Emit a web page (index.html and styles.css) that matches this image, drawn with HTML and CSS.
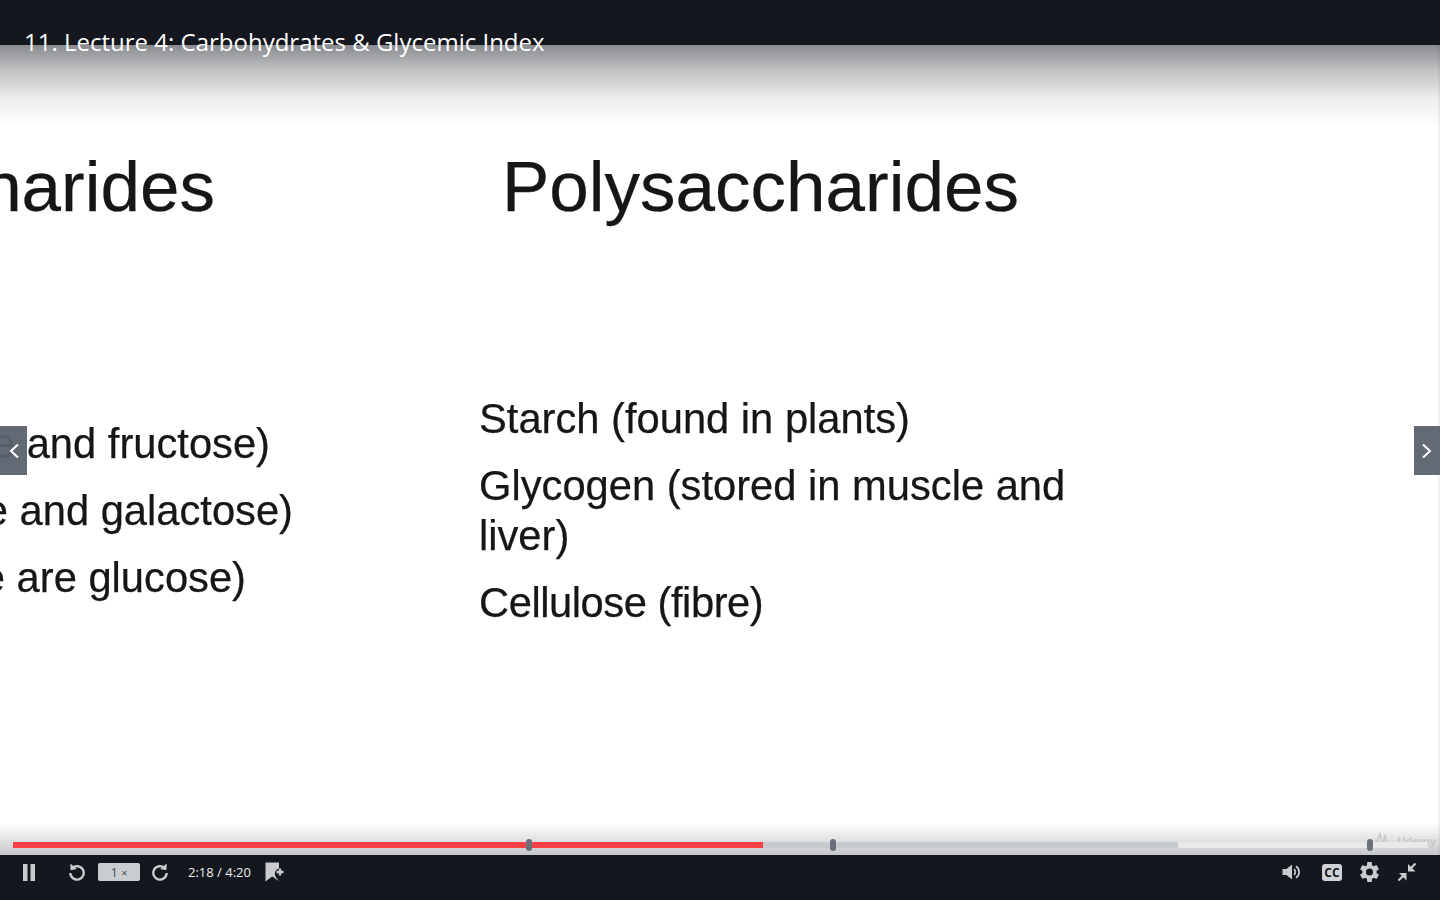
FILE: index.html
```html
<!DOCTYPE html>
<html lang="en">
<head>
    <meta charset="UTF-8">
    <title>11. Lecture 4: Carbohydrates &amp; Glycemic Index</title>
    <link rel="stylesheet" href="styles.css">
</head>
<body>
    <div class="player">
        <header class="title-bar">
            <div class="title">11. Lecture 4: Carbohydrates &amp; Glycemic Index</div>
        </header>

        <main class="video">
            <div class="slide">
                <div class="slide-left">
                    <div class="slide-heading heading-left"><span>harides</span></div>
                    <div class="left-list">
                        <div class="slide-line line-fructose"><span>e and fructose)</span></div>
                        <div class="slide-line line-galactose"><span>e and galactose)</span></div>
                        <div class="slide-line line-glucose"><span>e are glucose)</span></div>
                    </div>
                </div>
                <div class="slide-right">
                    <div class="slide-heading heading-right">Polysaccharides</div>
                    <div class="right-list">
                        <div class="slide-line">Starch (found in plants)</div>
                        <div class="slide-line">Glycogen (stored in muscle and<br>liver)</div>
                        <div class="slide-line line-cellulose">Cellulose (fibre)</div>
                    </div>
                </div>
            </div>

            <div class="shade-top"></div>
            <div class="shade-bottom"></div>

            <button class="nav-arrow nav-prev">
                <svg width="12" height="16" viewBox="0 0 12 16"><path d="M10 1.500 3 8l7 6.500" fill="none" stroke="#fff" stroke-width="2"/></svg>
            </button>
            <button class="nav-arrow nav-next">
                <svg width="12" height="16" viewBox="0 0 12 16"><path d="M2 1.500 9 8l-7 6.500" fill="none" stroke="#fff" stroke-width="2"/></svg>
            </button>

            <div class="watermark">
                <svg width="22" height="16" viewBox="0 0 22 16"><path d="M1 11 5 9 8 2l2 12 3-11 2 9 6-1" fill="none" stroke="#c8c8c8" stroke-width="1.500"/></svg>
                <span>Udemy</span>
            </div>

            <div class="progress">
                <div class="progress-track">
                    <div class="progress-buffered"></div>
                    <div class="progress-played"></div>
                </div>
                <span class="marker marker-1"></span>
                <span class="marker marker-2"></span>
                <span class="marker marker-3"></span>
            </div>
        </main>

        <footer class="controls">
            <div class="controls-left">
                <button class="ctl ctl-pause">
                    <svg width="12" height="17" viewBox="0 0 12 17"><path d="M0 0h4.500v17H0zM7.500 0H12v17H7.500z" fill="#c9cbcf"/></svg>
                </button>
                <button class="ctl ctl-back">
                    <svg width="18" height="18" viewBox="0 0 18 18"><path d="M4.200 5.200A6.700 6.700 0 1 1 2.300 10" fill="none" stroke="#c9cbcf" stroke-width="2.400"/><path d="M2.200 0.600 2.600 7.200 9 6z" fill="#c9cbcf"/></svg>
                </button>
                <div class="speed">1 <small>&times;</small></div>
                <button class="ctl ctl-forward">
                    <svg width="18" height="18" viewBox="0 0 18 18"><path d="M13.800 5.200A6.700 6.700 0 1 0 15.700 10" fill="none" stroke="#c9cbcf" stroke-width="2.400"/><path d="M15.800 0.600 15.400 7.200 9 6z" fill="#c9cbcf"/></svg>
                </button>
                <div class="time">2:18 / 4:20</div>
                <button class="ctl ctl-bookmark">
                    <svg width="21" height="20" viewBox="0 0 21 20"><path d="M0.500 0.500H14V6.500A5.500 5.500 0 0 0 11 15.200L14 19 7.200 14.500 0.500 19.500z" fill="#c9cbcf"/><path d="M15 6.500v7M11.500 10h7" stroke="#c9cbcf" stroke-width="2.400" fill="none"/></svg>
                </button>
            </div>
            <div class="controls-right">
                <button class="ctl">
                    <svg width="20" height="16" viewBox="0 0 20 16"><path d="M0.500 5H4.500L10 0.500V15.500L4.500 11H0.500z" fill="#c9cbcf"/><path d="M12 5.200A3.600 3.600 0 0 1 12 10.800" fill="none" stroke="#c9cbcf" stroke-width="1.700"/><path d="M14 2.200A7 7 0 0 1 14 13.800" fill="none" stroke="#c9cbcf" stroke-width="1.700"/></svg>
                </button>
                <div class="cc">CC</div>
                <button class="ctl">
                    <svg width="19" height="20" viewBox="2 1.600 20 20.800"><path fill="#c9cbcf" fill-rule="evenodd" d="M19.400 13a7.500 7.500 0 0 0 0-2l2.500-2-2.500-4.300-3 1.200a7.600 7.600 0 0 0-1.700-1L14.300 1.600H9.700L9.300 4.900a7.600 7.600 0 0 0-1.700 1l-3-1.200L2.100 9l2.500 2a7.500 7.500 0 0 0 0 2l-2.500 2 2.500 4.300 3-1.200a7.600 7.600 0 0 0 1.700 1l.4 3.300h4.600l.4-3.300a7.600 7.600 0 0 0 1.700-1l3 1.200 2.500-4.300zM12 15.700a3.700 3.700 0 1 1 0-7.400 3.700 3.700 0 0 1 0 7.400z"/></svg>
                </button>
                <button class="ctl">
                    <svg width="20" height="20" viewBox="0 0 20 20"><path d="M18.500 1.500 12.500 7.500M1.500 18.500 7.500 12.500" stroke="#c9cbcf" stroke-width="2.200" fill="none"/><path d="M11 2V9.500H18.500z" fill="#c9cbcf"/><path d="M2 11H9.500V18.500z" fill="#c9cbcf"/></svg>
                </button>
            </div>
        </footer>
    </div>
</body>
</html>
```

FILE: styles.css
```css
* {
    box-sizing: border-box;
}
body {
    margin: 0;
    background: #14171e;
    font-family: "Open Sans", sans-serif;
    overflow: hidden;
}
button {
    background: none;
    border: none;
    padding: 0;
    cursor: pointer;
}
.player {
    display: flex;
    flex-direction: column;
    height: 900px;
}
.title-bar {
    height: 45px;
    background: #14171e;
    padding: 25px 0 0 24px;
    position: relative;
    z-index: 3;
}
.title {
    color: #fff;
    font-size: 24px;
    font-weight: 400;
    line-height: 34px;
    white-space: nowrap;
}

/* video area */
.video {
    flex: 1;
    position: relative;
    overflow: hidden;
    background: #fff;
}
.slide {
    display: grid;
    grid-template-columns: 300px 1fr;
    column-gap: 179px;
    height: 100%;
    padding-top: 102px;
    border-right: 2px solid #f2f2f3;
    color: #161616;
    font-family: "Liberation Sans", Arial, sans-serif;
    -webkit-text-stroke: 0.25px #161616;
    filter: blur(0.5px);
}
.slide-heading {
    font-size: 71px;
    line-height: 80px;
    white-space: nowrap;
}
.heading-left {
    display: flex;
    justify-content: flex-end;
    padding-right: 85px;
}
.heading-right {
    padding-left: 23px;
}
.slide-line {
    font-size: 41.7px;
    line-height: 50px;
    margin-bottom: 17px;
    white-space: nowrap;
}
.line-cellulose {
    letter-spacing: -0.45px;
}
.right-list {
    margin-top: 167px;
}
.left-list {
    margin-top: 192px;
}
.left-list .slide-line {
    display: flex;
    justify-content: flex-end;
}
.line-fructose {
    padding-right: 30px;
}
.line-galactose {
    padding-right: 7px;
}
.line-glucose {
    padding-right: 54px;
}

/* gradients over the video */
.shade-top {
    position: absolute;
    top: 0;
    left: 0;
    right: 0;
    height: 82px;
    background: linear-gradient(rgba(20, 23, 30, 0.5), rgba(20, 23, 30, 0.27) 30%, rgba(20, 23, 30, 0.07) 67%, rgba(20, 23, 30, 0));
}
.shade-bottom {
    position: absolute;
    bottom: 0;
    left: 0;
    right: 0;
    height: 32px;
    background: linear-gradient(rgba(20, 23, 30, 0), rgba(20, 23, 30, 0.24));
}
.nav-arrow {
    position: absolute;
    top: 381px;
    height: 49px;
    background: rgba(92, 98, 108, 0.95);
    display: flex;
    align-items: center;
    justify-content: center;
}
.nav-prev {
    left: 0;
    width: 27px;
}
.nav-next {
    right: 0;
    width: 26px;
}
.watermark {
    position: absolute;
    right: 4px;
    bottom: 7px;
    display: flex;
    align-items: center;
    gap: 3px;
    color: #c8c8c8;
    font-size: 11px;
    font-weight: 700;
    filter: blur(0.5px);
}

/* scrubber */
.progress {
    position: absolute;
    left: 13px;
    bottom: 7px;
    width: 1415px;
    height: 6px;
}
.progress-track {
    position: relative;
    height: 6px;
    background: #e9e9ea;
}
.progress-buffered {
    position: absolute;
    left: 0;
    top: 0;
    bottom: 0;
    width: 1165px;
    background: #c6cbcd;
}
.progress-played {
    position: absolute;
    left: 0;
    top: 0;
    bottom: 0;
    width: 750px;
    background: #ff4145;
}
.marker {
    position: absolute;
    top: -3px;
    width: 6px;
    height: 12px;
    border-radius: 3px;
    background: #6a707c;
}
.marker-1 {
    left: 513px;
}
.marker-2 {
    left: 817px;
}
.marker-3 {
    left: 1354px;
}

/* control bar */
.controls {
    height: 45px;
    background: #14171e;
    display: flex;
    align-items: center;
    justify-content: space-between;
    padding: 0 23px 11px 23px;
}
.controls-left, .controls-right {
    display: flex;
    align-items: center;
}
.ctl {
    display: flex;
    align-items: center;
    justify-content: center;
}
.ctl-back {
    margin-left: 33px;
}
.speed {
    width: 42px;
    height: 18px;
    margin-left: 12px;
    border-radius: 2px;
    background: #c9ccd0;
    color: #4a4f59;
    font-size: 13px;
    line-height: 18px;
    text-align: center;
}
.speed small {
    font-size: 11px;
}
.ctl-forward {
    margin-left: 11px;
}
.time {
    margin-left: 19px;
    color: #eceded;
    font-size: 13px;
    line-height: 18px;
    white-space: nowrap;
}
.ctl-bookmark {
    margin-left: 14px;
}
.controls-right {
    gap: 18px;
}
.cc {
    width: 20px;
    height: 17px;
    margin-left: 2px;
    border-radius: 3px;
    background: #d0d2d5;
    color: #14171e;
    font-size: 12px;
    font-weight: 700;
    line-height: 17px;
    text-align: center;
}
```
